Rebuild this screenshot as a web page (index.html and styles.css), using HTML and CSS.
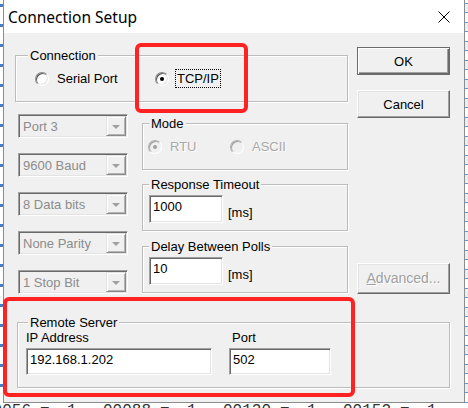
FILE: index.html
```html
<!DOCTYPE html>
<html lang="en">
<head>
  <meta charset="UTF-8">
  <title>Connection Setup</title>
  <link rel="stylesheet" href="styles.css">
</head>
<body>
  <div class="desktop">
    <div class="strip strip-left"></div>

    <div class="dialog">
      <div class="titlebar">
        <span class="title">Connection Setup</span>
        <svg class="close" width="12" height="12" viewBox="0 0 12 12">
          <path d="M0.5 0.5L11.5 11.5M11.5 0.5L0.5 11.5" stroke="#000" stroke-width="1" fill="none"/>
        </svg>
      </div>

      <div class="client">
        <div class="top">
          <div class="main">
            <fieldset class="group group-conn">
              <legend>Connection</legend>
              <div class="radio-row">
                <div class="opt opt-serial"><span class="radio"></span><span>Serial Port</span></div>
                <div class="opt opt-tcp"><span class="radio checked"></span><span class="focus">TCP/IP</span></div>
              </div>
            </fieldset>

            <div class="middle">
              <div class="combos">
                <div class="combo"><span>Port 3</span><span class="drop"></span></div>
                <div class="combo"><span>9600 Baud</span><span class="drop"></span></div>
                <div class="combo"><span>8 Data bits</span><span class="drop"></span></div>
                <div class="combo"><span>None Parity</span><span class="drop"></span></div>
                <div class="combo"><span>1 Stop Bit</span><span class="drop"></span></div>
              </div>

              <div class="groups">
                <fieldset class="group group-mode">
                  <legend>Mode</legend>
                  <div class="radio-row disabled">
                    <div class="opt opt-rtu"><span class="radio checked"></span><span>RTU</span></div>
                    <div class="opt"><span class="radio"></span><span>ASCII</span></div>
                  </div>
                </fieldset>

                <fieldset class="group group-time">
                  <legend>Response Timeout</legend>
                  <div class="field-row">
                    <div class="edit edit-short">1000</div>
                    <span class="unit">[ms]</span>
                  </div>
                </fieldset>

                <fieldset class="group group-delay">
                  <legend>Delay Between Polls</legend>
                  <div class="field-row">
                    <div class="edit edit-short">10</div>
                    <span class="unit">[ms]</span>
                  </div>
                </fieldset>
              </div>
            </div>
          </div>

          <div class="side">
            <div class="btn btn-default">OK</div>
            <div class="btn btn-cancel">Cancel</div>
            <div class="btn btn-adv"><span><u>A</u>dvanced...</span></div>
          </div>
        </div>

        <fieldset class="group group-remote">
          <legend>Remote Server</legend>
          <div class="remote-row">
            <div class="remote-col">
              <div class="lbl">IP Address</div>
              <div class="edit edit-ip">192.168.1.202</div>
            </div>
            <div class="remote-col">
              <div class="lbl lbl-port">Port</div>
              <div class="edit edit-port">502</div>
            </div>
          </div>
        </fieldset>
      </div>
    </div>

    <div class="strip strip-right"></div>
  </div>

  <div class="behind">
    <div class="cell"><span class="num">00056</span><span class="eq">=</span><span>1</span></div>
    <div class="cell"><span class="num">00088</span><span class="eq">=</span><span>1</span></div>
    <div class="cell"><span class="num">00120</span><span class="eq">=</span><span>1</span></div>
    <div class="cell"><span class="num">00152</span><span class="eq">=</span><span>1</span></div>
  </div>

  <!-- annotation marks drawn over the dialog -->
  <div class="mark mark-tcp"></div>
  <div class="mark mark-remote"></div>
</body>
</html>
```

FILE: styles.css
```css
* {
  margin: 0;
  padding: 0;
  box-sizing: border-box;
}

html, body {
  width: 468px;
  height: 408px;
  overflow: hidden;
}

body {
  position: relative;
  background-color: #fff;
  font-family: "Liberation Sans", Arial, sans-serif;
  font-size: 13px;
  line-height: 15px;
  color: #000;
}

.desktop {
  display: flex;
  height: 403px;
}

.strip {
  width: 3px;
  flex: none;
}

.strip-left {
  background: repeating-linear-gradient(to bottom, #fff 0 4px, #4a7cc4 4px 7px, #fff 7px 20px);
}

.strip-right {
  background: repeating-linear-gradient(to bottom, #fff 0 3px, #6f95c9 3px 4px, #e8eef6 4px 12px, #6f95c9 12px 13px, #fff 13px 19px);
}

.dialog {
  position: relative;
  z-index: 1;
  width: 462px;
  height: 403px;
  flex: none;
  display: flex;
  flex-direction: column;
  background-color: #f0f0f0;
  border: 1px solid #8c8c8c;
  border-top: none;
}

.titlebar {
  height: 33px;
  flex: none;
  display: flex;
  align-items: center;
  justify-content: space-between;
  padding: 0 14px 0 4px;
  background-color: #fff;
}

.title {
  font-family: "Noto Sans", "Open Sans", sans-serif;
  font-size: 15.5px;
  line-height: 20px;
  color: #000;
}

.close {
  margin-top: 1px;
}

.client {
  flex: 1;
  padding: 15px 0 0 11px;
}

.top {
  display: flex;
  gap: 9px;
}

.main {
  width: 333px;
}

.side {
  width: 93px;
  margin-top: -1px;
  display: flex;
  flex-direction: column;
}

/* group boxes */
.group {
  border: 1px solid #bcbcbc;
  box-shadow: 1px 1px 0 #fff, inset 1px 1px 0 #fff;
}

.group legend {
  margin-left: 12px;
  padding: 0 2px;
  background-color: #f0f0f0;
  line-height: 15px;
}

.group-conn {
  height: 54px;
}

.radio-row {
  display: flex;
  align-items: center;
  height: 19px;
  margin-top: 6px;
  padding-left: 19px;
}

.opt {
  display: flex;
  align-items: center;
  gap: 8px;
}

.opt-serial {
  width: 120px;
}

.opt-tcp {
  gap: 6px;
}

.focus {
  border: 1px dotted #000;
  padding: 1px 1px;
}

.radio {
  position: relative;
  width: 14px;
  height: 14px;
  flex: none;
  border-radius: 50%;
  background-color: #fff;
  border: 1px solid;
  border-color: #8a8a8a #fff #fff #8a8a8a;
  box-shadow: inset 1px 1px 0 #555, inset -1px -1px 0 #e3e3e3;
}

.radio.checked::after {
  content: '';
  position: absolute;
  left: 4px;
  top: 4px;
  width: 4px;
  height: 4px;
  border-radius: 50%;
  background-color: #000;
}

.disabled {
  color: #a8a8a8;
  text-shadow: 1px 1px 0 #fff;
}

.disabled .radio {
  background-color: #f0f0f0;
  border-color: #b0b0b0 #fff #fff #b0b0b0;
  box-shadow: inset 1px 1px 0 #a0a0a0;
}

.disabled .radio.checked::after {
  background-color: #a0a0a0;
}

.middle {
  display: flex;
  margin-top: 12px;
}

.combos {
  width: 110px;
  margin-left: 3px;
  display: flex;
  flex-direction: column;
  gap: 15px;
}

.combo {
  height: 24px;
  display: flex;
  align-items: center;
  justify-content: space-between;
  padding: 0 1px 0 4px;
  color: #8c8c8c;
  background-color: #f0f0f0;
  border: 1px solid;
  border-color: #a0a0a0 #fff #fff #a0a0a0;
  box-shadow: inset 1px 1px 0 #696969, inset -1px -1px 0 #e3e3e3;
}

.drop {
  width: 20px;
  height: 20px;
  display: flex;
  align-items: center;
  justify-content: center;
  background-color: #f0f0f0;
  border: 1px solid;
  border-color: #e3e3e3 #8a8a8a #8a8a8a #e3e3e3;
  box-shadow: inset 1px 1px 0 #fff, inset -1px -1px 0 #b4b4b4;
}

.drop::before {
  content: '';
  width: 0;
  height: 0;
  border-left: 4px solid transparent;
  border-right: 4px solid transparent;
  border-top: 4px solid #a0a0a0;
  margin-top: 1px;
}

.groups {
  width: 206px;
  margin-left: 14px;
  padding-top: 2px;
  display: flex;
  flex-direction: column;
}

.group-mode,
.group-time,
.group-delay {
  height: 54px;
}

.group-mode legend,
.group-time legend,
.group-delay legend {
  margin-left: 6px;
}

.group-mode .radio-row {
  padding-left: 5px;
}

.opt-rtu {
  width: 82px;
}

.group-time {
  margin-top: 7px;
}

.group-delay {
  margin-top: 8px;
}

.field-row {
  display: flex;
  align-items: flex-start;
  margin-top: 3px;
  padding-left: 6px;
}

.edit {
  height: 28px;
  padding: 3px 3px;
  background-color: #fff;
  border: 1px solid;
  border-color: #a0a0a0 #fff #fff #a0a0a0;
  box-shadow: inset 1px 1px 0 #696969, inset -1px -1px 0 #e3e3e3;
}

.edit-short {
  width: 74px;
}

.unit {
  margin: 10px 0 0 5px;
}

/* push buttons */
.btn {
  height: 28px;
  display: flex;
  align-items: center;
  justify-content: center;
  background-color: #f0f0f0;
  border: 1px solid;
  border-color: #fff #696969 #696969 #fff;
  box-shadow: inset -1px -1px 0 #a0a0a0, inset 1px 1px 0 #e3e3e3;
}

.btn-default {
  border-color: #6b6b6b;
  box-shadow: inset 1px 1px 0 #fff, inset -1px -1px 0 #696969, inset -2px -2px 0 #a0a0a0;
}

.btn-cancel {
  margin-top: 15px;
}

.btn-adv {
  height: 31px;
  margin-top: 145px;
  font-size: 14px;
  color: #a0a0a0;
  text-shadow: 1px 1px 0 #fff;
}

.group-remote {
  width: 433px;
  height: 73px;
  margin: 21px 0 0 2px;
}

.group-remote legend {
  margin-left: 10px;
}

.remote-row {
  display: flex;
  gap: 17px;
  padding-left: 8px;
}

.lbl {
  margin-bottom: 3px;
}

.lbl-port {
  padding-left: 3px;
}

.edit-ip {
  width: 186px;
  height: 27px;
}

.edit-port {
  width: 102px;
  height: 27px;
}

/* the table of the window behind the dialog */
.behind {
  display: flex;
  margin: -1px 0 0 -17px;
  font-family: "Liberation Mono", monospace;
  font-size: 16px;
  line-height: 18px;
  color: #333;
}

.cell {
  width: 120px;
  flex: none;
  display: flex;
}

.num {
  width: 57px;
}

.eq {
  width: 27px;
}

.mark {
  position: absolute;
  z-index: 2;
  border: 4px solid #ff2222;
  border-radius: 6px;
}

.mark-tcp {
  left: 135px;
  top: 43px;
  width: 113px;
  height: 70px;
}

.mark-remote {
  left: 3px;
  top: 297px;
  width: 352px;
  height: 100px;
}
```
